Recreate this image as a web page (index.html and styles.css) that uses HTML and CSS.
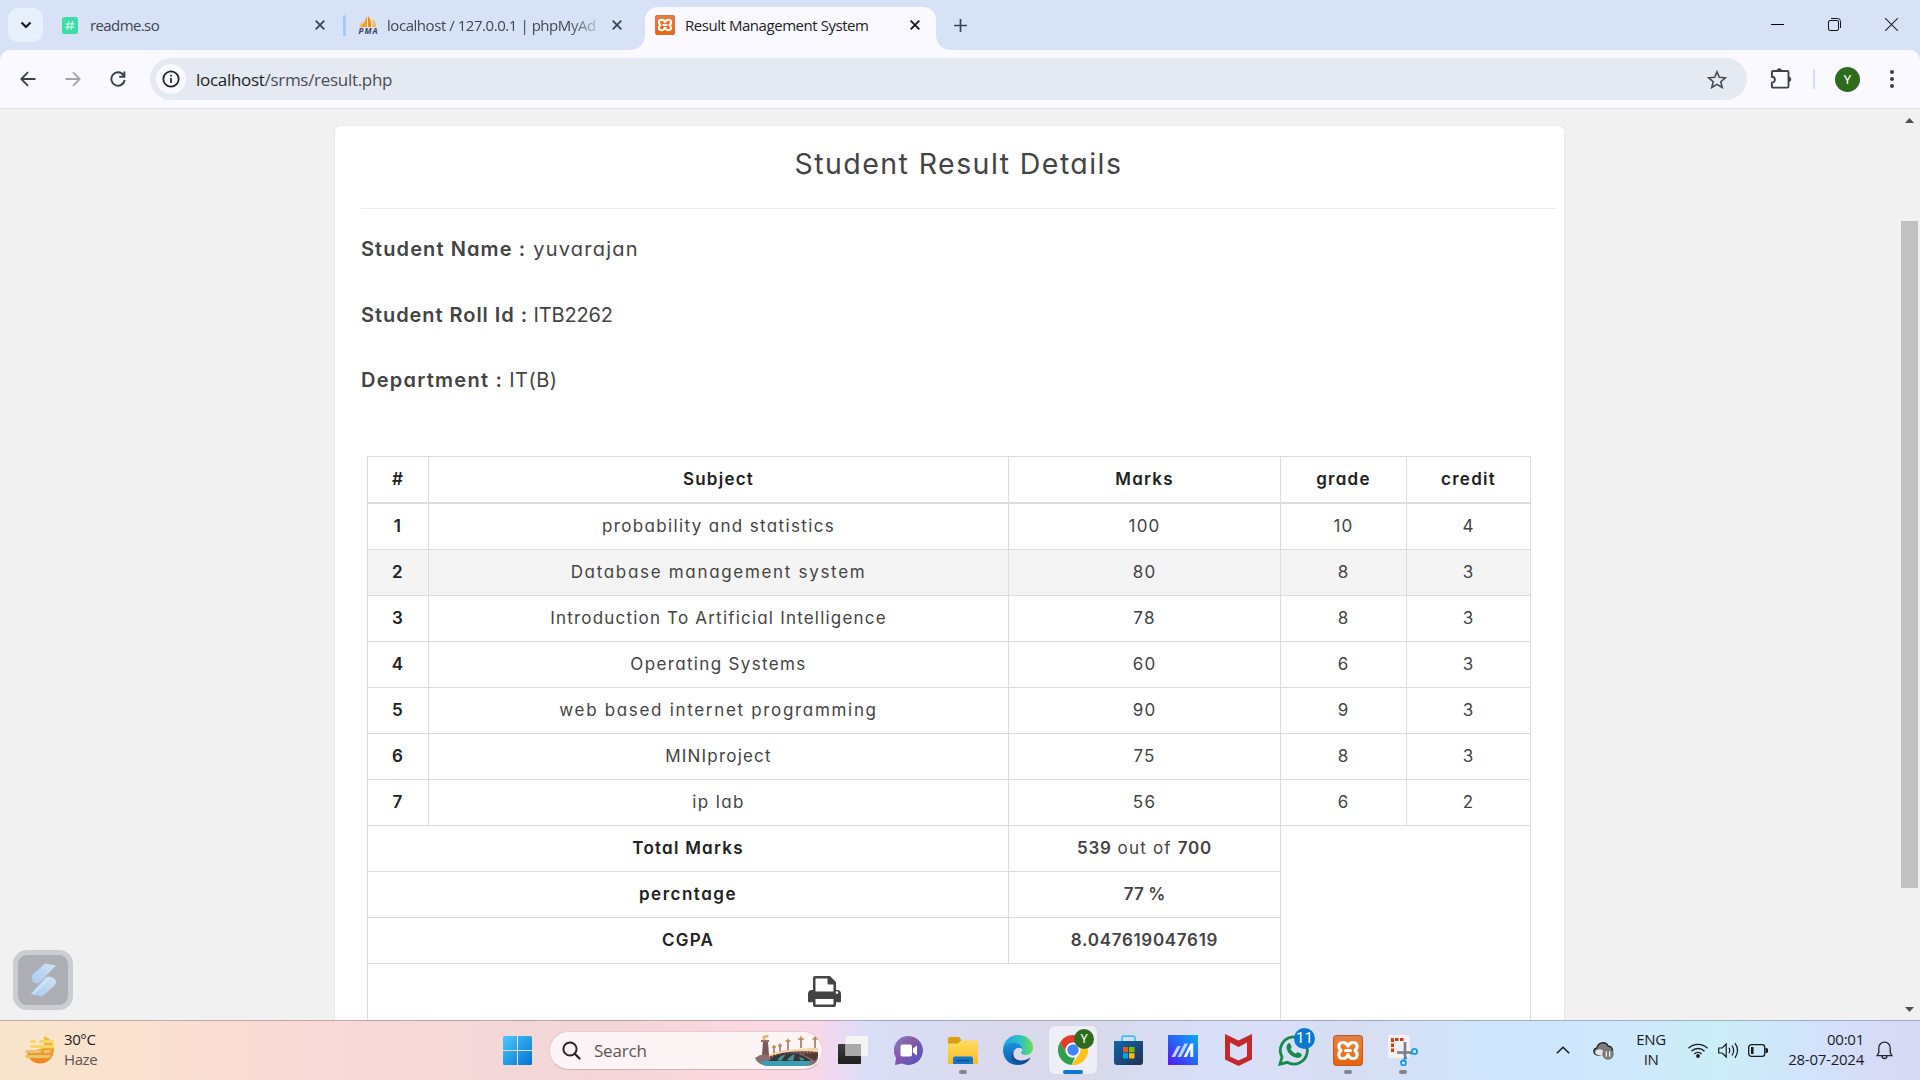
FILE: index.html
```html
<!DOCTYPE html>
<html lang="en">
<head>
<meta charset="utf-8">
<title>Result Management System</title>
<link rel="stylesheet" href="styles.css">
</head>
<body>
<svg class="defs" width="0" height="0">
  <defs>
    <linearGradient id="gWin" x1="0" y1="0" x2="1" y2="1"><stop offset="0" stop-color="#4cc9fb"/><stop offset="1" stop-color="#0072d0"/></linearGradient>
    <linearGradient id="gOrange" x1="0" y1="0" x2="0" y2="1"><stop offset="0" stop-color="#d9814a"/><stop offset=".25" stop-color="#f1782b"/><stop offset="1" stop-color="#e8640e"/></linearGradient>
    <linearGradient id="gChat" x1="0" y1="0" x2="1" y2="1"><stop offset="0" stop-color="#7b83c9"/><stop offset=".4" stop-color="#8a5aa8"/><stop offset="1" stop-color="#4b52c4"/></linearGradient>
    <linearGradient id="gFolder" x1="0" y1="0" x2="0" y2="1"><stop offset="0" stop-color="#ffdb63"/><stop offset="1" stop-color="#fbbd20"/></linearGradient>
    <linearGradient id="gStore" x1="0" y1="0" x2="1" y2="1"><stop offset="0" stop-color="#0b67ad"/><stop offset="1" stop-color="#23304f"/></linearGradient>
    <linearGradient id="gAsus" x1="0" y1="1" x2="1" y2="0"><stop offset="0" stop-color="#5a14f5"/><stop offset=".45" stop-color="#2b5cf8"/><stop offset="1" stop-color="#0aa8ff"/></linearGradient>
    <linearGradient id="gEdge" x1="0" y1="0" x2="1" y2="0"><stop offset="0" stop-color="#1fa3e4"/><stop offset=".6" stop-color="#2fc3c0"/><stop offset="1" stop-color="#6fdc4f"/></linearGradient>
    <linearGradient id="gEdge2" x1="0" y1="0" x2="0" y2="1"><stop offset="0" stop-color="#1b8fdf"/><stop offset="1" stop-color="#0d5ba8"/></linearGradient>
    <linearGradient id="gSun" x1="0" y1="0" x2="0" y2="1"><stop offset="0" stop-color="#f3c33c"/><stop offset="1" stop-color="#f0801f"/></linearGradient>
    <linearGradient id="gBlade" x1="0" y1="1" x2="1" y2="0"><stop offset="0" stop-color="#a9cbf0"/><stop offset="1" stop-color="#cfe2f4"/></linearGradient>
    <linearGradient id="gDark" x1="0" y1="0" x2="0" y2="1"><stop offset="0" stop-color="#3c3c3c"/><stop offset="1" stop-color="#1f1f1f"/></linearGradient>
    <symbol id="xampp" viewBox="0 0 30 32" preserveAspectRatio="none">
      <rect x=".5" y=".5" width="29" height="31" rx="3" fill="url(#gOrange)" stroke="#b9581a"/>
      <path d="M15 11.500C14 8.500 12 7.700 9.800 7.700c-4.300 0-5.300 5-1.800 8.300-3.500 3.300-2.500 8.300 1.800 8.300 2.200 0 4.200-1 5.200-4.300 1 3.300 3 4.300 5.200 4.300 4.300 0 5.300-5 1.800-8.300 3.500-3.300 2.500-8.300-1.800-8.300-2.200 0-4.200.8-5.200 3.800zM12.500 16h5" fill="none" stroke="#fff" stroke-width="3.200" stroke-linejoin="round" stroke-linecap="round"/>
    </symbol>
  </defs>
</svg>
<div class="screen">
  <header class="tabstrip">
    <button class="tab-search"><svg width="12" height="8" viewBox="0 0 12 8"><path d="M1.500 1.500 6 6l4.500-4.500" fill="none" stroke="#17191d" stroke-width="2.200"/></svg></button>
    <div class="tab tab-readme">
      <svg width="16" height="17" viewBox="0 0 16 17"><rect width="16" height="17" rx="2.500" fill="#3ddba5"/><path d="M6.800 4 5.200 13M10.600 4 9 13M3.600 6.800h9M3.200 10.200h9" stroke="#c9fbe7" stroke-width="1.200"/></svg>
      <span class="tab-title">readme.so</span>
      <svg class="x" width="10" height="10" viewBox="0 0 10 10"><path d="m.7.7 8.600 8.600M9.300.7.7 9.300" stroke="#3c4350" stroke-width="1.800"/></svg>
    </div>
    <i class="tab-sep"></i>
    <div class="tab tab-pma">
      <svg width="20" height="20" viewBox="0 0 20 20"><path d="M9 1v11H2.500C5 9 7.500 5 9 1z" fill="#f7a11b"/><path d="M10 1c3 3 3.500 7 3 11h-3z" fill="#f58a0b"/><path d="M14.500 4c2.500 2 3.500 5 3.500 8h-4c.8-3 .8-5 .5-8zM5 5 3 12H1z" fill="#f7b65a"/><text x="10" y="19" text-anchor="middle" class="pma-text" textLength="19">PMA</text></svg>
      <span class="tab-title fade">localhost / 127.0.0.1 | phpMyAd</span>
      <svg class="x" width="10" height="10" viewBox="0 0 10 10"><path d="m.7.7 8.600 8.600M9.300.7.7 9.300" stroke="#3c4350" stroke-width="1.800"/></svg>
    </div>
    <div class="tab tab-active">
      <svg width="20" height="20"><use href="#xampp"/></svg>
      <span class="tab-title">Result Management System</span>
      <svg class="x" width="10" height="10" viewBox="0 0 10 10"><path d="m.7.7 8.600 8.600M9.300.7.7 9.300" stroke="#17191d" stroke-width="1.900"/></svg>
    </div>
    <svg class="plus" width="13" height="13" viewBox="0 0 13 13"><path d="M6.500 0v13M0 6.500h13" stroke="#3c4350" stroke-width="1.700"/></svg>
    <div class="win-controls">
      <svg width="13" height="13" viewBox="0 0 13 13"><path d="M0 6.500h13" stroke="#000"/></svg>
      <svg width="13" height="13" viewBox="0 0 13 13"><rect x=".5" y="2.500" width="10" height="10" rx="1.500" fill="none" stroke="#111"/><path d="M3 .5h6.500a3 3 0 0 1 3 3V10" fill="none" stroke="#111"/></svg>
      <svg width="13" height="13" viewBox="0 0 13 13"><path d="m0 0 13 13M13 0 0 13" stroke="#222" stroke-width="1.100"/></svg>
    </div>
  </header>
  <div class="toolbar-back">
  <nav class="toolbar">
    <svg class="nav" width="16" height="16" viewBox="0 0 16 16"><path d="M15.500 8H1.500M8 1.200 1.300 8 8 14.800" fill="none" stroke="#3a414e" stroke-width="1.800"/></svg>
    <svg class="nav" width="16" height="16" viewBox="0 0 16 16"><path d="M.5 8h14M8 1.200 14.700 8 8 14.800" fill="none" stroke="#a3a5ab" stroke-width="1.800"/></svg>
    <svg class="nav" width="16" height="16" viewBox="0 0 16 16"><path d="M13.600 4.200A6.700 6.700 0 1 0 14.700 9M14.400.5v5.200H9.200" fill="none" stroke="#3a414e" stroke-width="1.900"/></svg>
    <div class="omnibox">
      <span class="info"><svg width="18" height="18" viewBox="0 0 18 18"><circle cx="9" cy="9" r="7.700" fill="none" stroke="#22252b" stroke-width="1.800"/><path d="M9 8v5M9 4.800v1.700" stroke="#22252b" stroke-width="1.700"/></svg></span>
      <span class="url"><b>localhost</b>/srms/result.php</span>
      <svg class="star" width="20" height="19" viewBox="0 0 20 19"><path d="m10 1.800 2.300 5.500 6 .5-4.500 3.900 1.400 5.800L10 14.400l-5.200 3.100 1.400-5.800-4.500-3.900 6-.5z" fill="none" stroke="#474a50" stroke-width="1.600"/></svg>
    </div>
    <svg class="puzzle" width="22" height="22" viewBox="0 0 22 22"><path d="M1.900 4.200q0-1.200 1.200-1.200h14.200q1.200 0 1.200 1.200v14.200q0 1.200-1.200 1.200H3.100q-1.200 0-1.200-1.200v-3.600a3 3 0 0 0 0-6z" fill="none" stroke="#3a414e" stroke-width="1.900"/><path d="M7 3a2.300 2.300 0 0 1 4.600 0zM18.500 9a2.300 2.300 0 0 1 0 4.600z" fill="#3a414e" stroke="#3a414e"/></svg>
    <i class="tool-sep"></i>
    <span class="avatar">Y</span>
    <svg class="dots" width="4" height="18" viewBox="0 0 4 18"><g fill="#3a414e"><circle cx="2" cy="2" r="2"/><circle cx="2" cy="9" r="2"/><circle cx="2" cy="16" r="2"/></g></svg>
  </nav>
  </div>
  <div class="viewport">
    <main class="page">
      <section class="card">
        <h2>Student Result Details</h2>
        <hr>
        <p class="name"><b>Student Name :</b> yuvarajan</p>
        <p class="roll"><b>Student Roll Id :</b> ITB2262</p>
        <p class="dept"><b>Department :</b> IT(B)</p>
        <table>
          <colgroup><col class="c1"><col class="c2"><col class="c3"><col class="c4"><col class="c5"></colgroup>
          <thead><tr><th>#</th><th>Subject</th><th>Marks</th><th>grade</th><th>credit</th></tr></thead>
          <tbody>
            <tr class="first"><th>1</th><td class="mid">probability and statistics</td><td>100</td><td>10</td><td>4</td></tr>
            <tr class="hover"><th>2</th><td class="wide">Database management system</td><td>80</td><td>8</td><td>3</td></tr>
            <tr><th>3</th><td>Introduction To Artificial Intelligence</td><td>78</td><td>8</td><td>3</td></tr>
            <tr><th>4</th><td class="mid">Operating Systems</td><td>60</td><td>6</td><td>3</td></tr>
            <tr><th>5</th><td class="wide">web based internet programming</td><td>90</td><td>9</td><td>3</td></tr>
            <tr><th>6</th><td>MINIproject</td><td>75</td><td>8</td><td>3</td></tr>
            <tr><th>7</th><td class="mid">ip lab</td><td>56</td><td>6</td><td>2</td></tr>
            <tr><th colspan="2">Total Marks</th><td><b>539</b> out of <b>700</b></td><td colspan="2" rowspan="4"></td></tr>
            <tr><th colspan="2" class="wide">percntage</th><td class="percent"><b>77 %</b></td></tr>
            <tr><th colspan="2">CGPA</th><td><b>8.047619047619</b></td></tr>
            <tr class="print"><td colspan="3"><svg width="33" height="31" viewBox="0 0 33 31"><path fill-rule="evenodd" d="M5 14V2q0-2 2-2h15l6 6v8h1q4 0 4 4v7.500q0 .8-.8.8H28V29q0 2-2 2H7q-2 0-2-2v-2.700H.8q-.8 0-.8-.8V18q0-4 4-4zM7.500 2.500v13h18v-7H21q-1.500 0-1.500-1.500V2.500zM7.500 23v5.500h18V23zM29 15.300a1.300 1.300 0 1 0 .01 2.600 1.300 1.300 0 0 0-.01-2.600z" fill="#444"/></svg></td></tr>
          </tbody>
        </table>
      </section>
    </main>
    <aside class="scrollbar">
      <svg width="9" height="5" viewBox="0 0 9 5"><path d="M0 5 4.500 0 9 5z" fill="#505050"/></svg>
      <i class="thumb"></i>
      <svg width="9" height="5" viewBox="0 0 9 5"><path d="m0 0 4.500 5L9 0z" fill="#505050"/></svg>
    </aside>
    <div class="widget"><svg width="27" height="34" viewBox="0 0 27 34"><path d="M15 .5 26 2.500 9.500 19.500Q6.500 21.500 3.500 19 0 15 3 11z" fill="url(#gBlade)"/><path d="M12 33.500.5 31 15.500 14.500Q19 12 24 15.500 28 18.500 24.500 22.500z" fill="url(#gBlade)"/><path d="M3 31 19 15" stroke="#d9e8f6" stroke-width="1.500"/></svg></div>
  </div>
  <footer class="taskbar">
    <div class="weather">
      <svg width="30" height="28" viewBox="0 0 30 28"><path d="M19 0c6 2 10 7 10 13.500A14 14 0 0 1 15 27.500C8 27.500 2 22 2 16l17-4z" fill="url(#gSun)"/><g stroke-linecap="round" stroke-width="2.800"><path d="M6.500 5.500h3M15.500 5.500H28M6.500 10.500H28" stroke="#f9d566"/><path d="M1.500 15.500H15M20 15.500h4M1.500 20.500H24" stroke="#e6c56e"/></g></svg>
      <div class="weather-text"><span>30°C</span><span class="dim">Haze</span></div>
    </div>
    <svg class="start" width="29" height="29" viewBox="0 0 29 29"><path d="M1.500 0H14v14H0V1.500Q0 0 1.500 0zM15 0h12.500Q29 0 29 1.500V14H15zM0 15h14v14H1.500Q0 29 0 27.500zM15 15h14v12.500q0 1.500-1.500 1.500H15z" fill="url(#gWin)"/></svg>
    <div class="search">
      <svg width="19" height="19" viewBox="0 0 19 19"><circle cx="8" cy="8" r="6.600" fill="none" stroke="#2b2525" stroke-width="2"/><path d="m12.800 12.800 4.700 4.700" stroke="#2b2525" stroke-width="2.300" stroke-linecap="round"/></svg>
      <span>Search</span>
      <svg class="bridge" width="64" height="31" viewBox="0 0 64 31"><path d="M0 23l5-3h9l12-4 37-3v11q-3 7-11 7H12Q3 30 0 23z" fill="#8c6d70"/><path d="M5 26h52q-3 5-9 5H12q-5-1.500-7-5z" fill="#3a9fb5"/><path d="M14 26c6-9 24-12 38-3l4 3z" fill="#37343b"/><path d="M22 25q4-5 9-6l-5 7zM32 25q4-5 8-6l-2 7zM44 22l6 2-4 2z" fill="#3f9691"/><path d="M14 19q20-6 49-6v4q-8-1-18-1-16 0-31 6z" fill="#f6d6a2"/><path d="M15 22q15-5 48-4" fill="none" stroke="#5c3f42" stroke-width="2" stroke-dasharray="2 1.500"/><path d="m47 19 13 7 3-5v-3z" fill="#5c3833"/><path d="M8 7h5l1 13H7z" fill="#77595e"/><path d="M6 6h8" stroke="#8e6b68" stroke-width="2"/><path d="M10 5q-3-3 0-4 2 2 3-1" stroke="#eba14f" stroke-width="1.800" fill="none"/><g stroke="#765044" stroke-width="1.200"><path d="M19 12v6M25 11v5M33 6v9M46 3v10M60 2v11"/></g><g fill="none" stroke="#b98850" stroke-width="1.300"><path d="M17 12h4M19 10v3M23 10.500h4M25 8.500v4M30.500 6h5M33 3.500v5M43 4h6M46 1v6M57.500 4h5M60 1.500v5"/></g></svg>
    </div>
    <div class="apps">
      <span class="app"><svg width="30" height="28" viewBox="0 0 30 28"><rect y="8" width="23" height="20" rx="1" fill="url(#gDark)"/><rect x="7.500" width="22.500" height="20" rx="1" fill="#f4f4f4"/><path d="M7.500 8H23v12H8.500q-1 0-1-1z" fill="#a9a9a9"/></svg></span>
      <span class="app"><svg width="29" height="29" viewBox="0 0 29 29"><path d="M14.500 0a14.500 14.500 0 1 1-6.500 27.500L1 29l1-7A14.500 14.500 0 0 1 14.500 0z" fill="url(#gChat)"/><rect x="6.500" y="8.500" width="11.500" height="12" rx="1.800" fill="#fff"/><path d="m19 12.500 4-3v10l-4-3z" fill="#fff"/></svg></span>
      <span class="app run"><svg width="30" height="27" viewBox="0 0 30 27"><path d="M0 2Q0 0 2 0h9l3 4v8H0z" fill="#dd9f10"/><path d="M0 6.500h10L13 3.500h15.500q1.500 0 1.500 1.500V27H0z" fill="url(#gFolder)"/><path d="M5 27v-5.500q0-2 2-2h16q2 0 2 2V27z" fill="#1378c9"/><path d="M9 23.500h12" stroke="#0c4c8c" stroke-width="1.500" stroke-linecap="round"/></svg></span>
      <span class="app"><svg width="30" height="30" viewBox="0 0 30 30"><path d="M15 0c9 0 15 6 15 12.500 0 5-3.500 7.500-7 7.500s-5-1.300-5-2c0-.8 1.200-1.500 1.200-4 0-3-3.500-6-8-6C5 8 1 12 0 15 0 6 7 0 15 0z" fill="url(#gEdge)"/><path d="M0 15c1-5 6-7.500 11-7.200 5 .2 8.200 3 8.200 6.200-4-3-9 0-9 5 0 7 9 9 17.300 3.500C25 27 20.500 30 15 30 6.500 30 0 24 0 15z" fill="url(#gEdge2)"/><path d="M10.200 19c0 7 9 9 17.300 3.500-3 5.500-7 7-11 6.800C9 28 5 20 13.500 13c-2 1.200-3.300 3.500-3.300 6z" fill="#124e93"/></svg></span>
      <span class="app chrome"><svg width="30" height="30" viewBox="0 0 30 30"><path d="M15 0a15 15 0 0 1 13 7.500H15A7.500 7.500 0 0 0 8.500 18.800L2 7.500A15 15 0 0 1 15 0z" fill="#e33b2e"/><path d="M2 7.500l6.500 11.200A7.500 7.500 0 0 0 17 22.300L13.500 30A15 15 0 0 1 2 7.500z" fill="#2ba24c"/><path d="M28 7.500A15 15 0 0 1 13.500 30l8-11.300A7.500 7.500 0 0 0 19 8.500l-1-1z" fill="#fcc31e"/><circle cx="15" cy="15" r="7.200" fill="#fff"/><circle cx="15" cy="15" r="5.700" fill="#4286f5"/></svg><em class="badge green">Y</em></span>
      <span class="app"><svg width="29" height="30" viewBox="0 0 29 30"><path d="M8 7V3q0-1.800 1.800-1.800h9.400Q21 1.200 21 3v4" fill="none" stroke="#39c3f3" stroke-width="1.700"/><path d="M0 6h29v21q0 3-3 3H3q-3 0-3-3z" fill="url(#gStore)"/><path d="M9 12h5v5.300H9z" fill="#f25022"/><path d="M15 12h5.500v5.300H15z" fill="#7fba00"/><path d="M9 18.200h5v5.300H9z" fill="#00a4ef"/><path d="M15 18.200h5.500v5.300H15z" fill="#ffb900"/></svg></span>
      <span class="app"><svg width="30" height="30" viewBox="0 0 30 30"><path d="M0 0h30v30H0z" fill="url(#gAsus)"/><path d="M3.500 22 9.500 11h3.300L7 22zM9.500 22 16.500 8.500H20L13 22z" fill="#c3d6ff"/><path d="M15.500 22 22.500 8.500h2.800V22h-3v-7.500L18.700 22z" fill="#f2f6ff"/></svg></span>
      <span class="app"><svg width="27" height="32" viewBox="0 0 27 32"><path d="m0 0 13.500 6.500L27 0v25.500L13.500 32 0 25.500zm5 8.500v14l8.500 4 8.500-4v-14l-8.500 4.500z" fill="#c3282d" fill-rule="evenodd"/></svg></span>
      <span class="app whats"><svg width="31" height="31" viewBox="0 0 31 31"><path d="M2 29.200 4 22A13.500 13.500 0 1 1 9.300 27.300z" fill="none" stroke="#16894b" stroke-width="2.800"/><path d="M10 8.500q1-1.200 2 0l1.700 3.200q0 1-1.200 2.300 2 3.500 5.300 4.700l1.800-1.600 4 2q.8 3.500-3.800 4Q11 22 8.500 13.500q-.2-3.200 1.500-5z" fill="#16894b"/></svg><em class="badge blue">11</em></span>
      <span class="app run"><svg width="30" height="31"><use href="#xampp"/></svg></span>
      <span class="app run snip"><svg width="30" height="31" viewBox="0 0 30 31"><rect width="22" height="23" rx="2" fill="#f1f0f2"/><path d="M4.500 17V4.500H16" fill="none" stroke="#d03a14" stroke-width="3" stroke-dasharray="3.500 1.500"/><path d="M17 7v14M9 17.500h14M16 17l2 7" stroke="#7b7d84" stroke-width="2.600"/><circle cx="26.500" cy="16.500" r="2.600" fill="none" stroke="#2196e8" stroke-width="1.800"/><circle cx="15.500" cy="28" r="2.500" fill="none" stroke="#2196e8" stroke-width="1.800"/><path d="m22 19 2.500-1.500M16.500 22v3" stroke="#2196e8" stroke-width="1.800"/></svg></span>
    </div>
    <div class="tray">
      <svg class="chev" width="14" height="8" viewBox="0 0 14 8"><path d="m.8 7.200 6.200-6 6.200 6" fill="none" stroke="#17191d" stroke-width="1.500"/></svg>
      <svg class="cloud" width="21" height="19" viewBox="0 0 21 19"><path d="M4.500 14.200C-.5 13 0 7.500 4 6.800 5 1 13 0 15 5c4 0 5.500 4 4 7z" fill="#7d7d7d" stroke="#222" stroke-width="1.300"/><path d="M2.500 13q-1-4 3-4.500 3-1 5 2l2 3.500H5z" fill="#e4e4e4"/><circle cx="15" cy="13" r="5.700" fill="#777"/><path d="M13.300 10.300v5.400M16.700 10.300v5.400" stroke="#fff" stroke-width="1.200"/></svg>
      <div class="lang"><span>ENG</span><span>IN</span></div>
      <svg class="wifi" width="20" height="15" viewBox="0 0 20 15"><g fill="none" stroke="#17191d" stroke-width="1.300"><path d="M.5 5.200a13.500 13.500 0 0 1 19 0M3.500 8.200a9.200 9.200 0 0 1 13 0M6.300 11a5.200 5.200 0 0 1 7.400 0"/></g><circle cx="10" cy="13" r="1.900" fill="#17191d"/></svg>
      <svg class="vol" width="21" height="17" viewBox="0 0 21 17"><g fill="none" stroke="#17191d" stroke-width="1.200"><path d="M.7 6h3.500l4-4v13l-4-4H.7z"/><path d="M11 5.800q1.500 2.700 0 5.400M14 3.500q3.300 5 0 10M17 1.200q5 7.300 0 14.600"/></g></svg>
      <svg class="batt" width="20" height="13" viewBox="0 0 20 13"><rect x=".7" y=".7" width="16" height="11.600" rx="2.600" fill="none" stroke="#17191d" stroke-width="1.300"/><path d="M3 3h2.500v7H3zM17.500 4h1q1.500 0 1.500 1.500v2Q20 9 18.500 9h-1z" fill="#17191d"/></svg>
      <div class="clock"><span>00:01</span><span>28-07-2024</span></div>
      <svg class="bell" width="17" height="19" viewBox="0 0 17 19"><path d="M2.800 11.500V6.800a5.700 5.700 0 0 1 11.400 0v4.700l1.800 3.200H1zM6 15a2.500 2.500 0 0 0 5 0" fill="none" stroke="#22242a" stroke-width="1.300"/></svg>
    </div>
  </footer>
</div>
</body>
</html>
```
FILE: styles.css
```css
* { box-sizing: border-box; }
body { margin: 0; font-family: "Open Sans", "Noto Sans", sans-serif; }
svg { display: block; flex: none; }
.defs { position: absolute; }
.screen { width: 1920px; height: 1080px; overflow: hidden; display: flex; flex-direction: column; }

.tabstrip { height: 50px; flex: none; background: #d8e2f7; display: flex; align-items: center; }
.tab-search { margin: 0 0 0 8px; padding: 0; width: 35px; height: 34px; border: 0; border-radius: 11px; background: #e9f0fd; display: flex; align-items: center; justify-content: center; }
.tab { display: flex; align-items: center; color: #41454d; font-size: 15px; white-space: nowrap; }
.tab .x { margin-left: auto; }
.tab-readme { width: 263px; margin-left: 19px; gap: 12px; }
.tab-readme .tab-title { letter-spacing: -.6px; }
.tab-sep { width: 3px; height: 21px; margin-left: 18px; border-radius: 2px; background: #a8c7fa; }
.tab-pma { width: 264px; margin-left: 12px; gap: 9px; }
.tab-title { letter-spacing: -.45px; }
.fade { -webkit-mask-image: linear-gradient(90deg, #000 87%, rgba(0,0,0,.25)); mask-image: linear-gradient(90deg, #000 87%, rgba(0,0,0,.25)); }
.pma-text { font: italic bold 8px "Open Sans", sans-serif; fill: #3b3d6e; }
.tab-active { align-self: flex-end; width: 291px; height: 43px; margin-left: 23px; padding: 0 16px 7px 10px; gap: 10px; background: #faf9ff; border-radius: 13px 13px 0 0; color: #1c1e22; position: relative; }
.tab-active::before, .tab-active::after { content: ""; position: absolute; bottom: 0; width: 14px; height: 14px; }
.tab-active::before { left: -14px; background: radial-gradient(circle at 0 0, transparent 13.500px, #faf9ff 14px); }
.tab-active::after { right: -14px; background: radial-gradient(circle at 100% 0, transparent 13.500px, #faf9ff 14px); }
.plus { margin-left: 18px; }
.win-controls { margin-left: auto; margin-right: 22px; padding-bottom: 1px; display: flex; gap: 44px; }

.toolbar-back { flex: none; background: #d8e2f7; }
.toolbar { height: 59px; background: #faf9ff; border-bottom: 1px solid #dedfe8; border-radius: 10px 10px 0 0; display: flex; align-items: center; padding-left: 20px; }
.nav { margin-right: 29px; }
.omnibox { width: 1597px; height: 42px; margin-left: -5px; padding: 0 20px 0 6px; border-radius: 21px; background: #e5e9f2; display: flex; align-items: center; }
.info { width: 30px; height: 30px; border-radius: 50%; background: #faf9ff; display: flex; align-items: center; justify-content: center; }
.url { margin-left: 10px; font-size: 17px; letter-spacing: -.3px; color: #4a4d53; }
.url b { font-weight: 400; color: #1c1e22; }
.star { margin-left: auto; }
.puzzle { margin-left: 23px; }
.tool-sep { width: 2px; height: 20px; margin-left: 21px; background: #cfe0fc; }
.avatar { width: 25px; height: 25px; margin-left: 20px; border-radius: 50%; background: #2f6b1c; color: #fff; font: 13px/25px Roboto, sans-serif; text-align: center; }
.dots { margin-left: 30px; }

.viewport { flex: none; height: 911px; background: #f1f1f1; position: relative; display: flex; overflow: hidden; font-family: Inter, sans-serif; font-feature-settings: "cv11"; }
.page { flex: 1; padding: 17px 0 0 335px; }
.card { width: 1229px; height: 1000px; padding: 0 8px 0 26px; background: #fff; border-radius: 5px; box-shadow: 0 0 2px rgba(0,0,0,.12); color: #444; }
.card h2 { margin: 0; padding-top: 17px; height: 82px; font-size: 28.500px; line-height: 42px; font-weight: 400; letter-spacing: 1.430px; text-align: center; }
.card hr { margin: 0; border: 0; height: 1px; background: #ececec; }
.card p { margin: 0; padding-top: 25px; height: 65px; font-size: 20px; line-height: 32px; letter-spacing: -.15px; }
.card p b { font-weight: 600; letter-spacing: 1.100px; }
.card p.name { padding-top: 24px; letter-spacing: 1.250px; }
.card p.roll b { letter-spacing: .95px; }
.card p.dept { height: 117px; letter-spacing: .45px; }
.card p.dept b { letter-spacing: 1.250px; }

table { width: 1164px; margin-left: 6px; table-layout: fixed; border-collapse: collapse; border: 1px solid #ddd; font-size: 17px; letter-spacing: 1.200px; text-align: center; }
.c1 { width: 61px; } .c2 { width: 580px; } .c3 { width: 272px; } .c4 { width: 126px; } .c5 { width: 124px; }
th, td { height: 46px; padding: 0 0 1px; border: 1px solid #ddd; line-height: 24px; vertical-align: middle; }
thead th { border-bottom-width: 2px; padding-bottom: 0; }
.first th, .first td { height: 47px; }
th { color: #222; font-weight: 600; letter-spacing: 1.250px; }
td.mid { letter-spacing: 1.350px; }
td.wide { letter-spacing: 1.680px; }
th.wide { letter-spacing: 1.500px; }
td b { font-weight: 600; letter-spacing: .7px; }
td.percent b { letter-spacing: .1px; }
.hover { background: #f4f4f4; }
.print td { height: 80px; vertical-align: top; padding-top: 12px; }
.print svg { margin: 0 auto; }

.scrollbar { width: 19px; padding: 9px 2px 8px 0; display: flex; flex-direction: column; align-items: center; }
.thumb { width: 17px; height: 667px; margin-top: 98px; margin-bottom: auto; background: #c1c1c1; }
.widget { position: absolute; left: 13px; top: 841px; width: 60px; height: 60px; border: 5px solid #cccdd1; border-radius: 14px; background: #adaeb4; display: flex; align-items: center; justify-content: center; }

.taskbar { height: 60px; flex: none; border-top: 1px solid rgba(60,60,80,.33); padding-bottom: 1px; display: flex; align-items: center; color: #1b1b1f;
  background-image: linear-gradient(90deg, #f8e5cb 0, #fae1d0 140px, #fadad8 300px, #f3d7d8 520px, #f4d5d8 620px, #fbd8e0 740px, #f8d8e6 815px, #eed9f2 835px, #d9def6 870px, #dad9ec 1000px, #d8d9ea 1080px, #d8dff8 1220px, #d7def3 1360px, #cfe6fc 1490px, #cfe8fc 1620px, #cbeef7 1720px, #d1e4fb 1800px, #d8d9f5 1900px); }
.weather { width: 478px; padding-left: 25px; display: flex; gap: 9px; align-items: center; }
.weather svg { margin-top: -1px; }
.weather-text { display: flex; flex-direction: column; font-size: 15px; line-height: 20px; letter-spacing: -.4px; margin-top: -3px; }
.dim { color: #5f5650; }
.start { margin-left: 25px; }
.search { width: 274px; height: 39px; margin-left: 17px; padding: 0 3px 0 12px; border-radius: 20px; background: #fcf4f5; border: 1px solid #e5cdd0; border-bottom-color: #cdb5b9; display: flex; align-items: center; color: #5c5556; font-size: 17px; letter-spacing: -.2px; }
.search span { margin-left: 13px; }
.bridge { margin-left: auto; }
.apps { display: flex; gap: 7px; margin-left: 6px; }
.app { width: 48px; height: 48px; display: flex; align-items: center; justify-content: center; position: relative; }
.app.run::after, .app.chrome::after { content: ""; position: absolute; left: 20px; bottom: 0; width: 8px; height: 4px; border-radius: 2px; background: #84858e; }
.app.chrome { background: #eeeef7; border-radius: 5px; box-shadow: 0 0 1px rgba(0,0,0,.15); }
.app.chrome::after { left: 14px; width: 20px; background: #0e78d0; }
.badge { position: absolute; right: 3px; top: 3px; width: 20px; height: 20px; border-radius: 50%; color: #fff; font: 12px/20px Roboto, sans-serif; text-align: center; }
.green { background: #2f6b1c; }
.blue { background: #0a78d0; top: 2px; right: 2px; width: 21px; height: 21px; font-size: 15px; line-height: 21px; }
.tray { display: flex; align-items: center; margin-left: auto; font-size: 15px; line-height: 20px; }
.cloud { margin-left: 23px; }
.lang { width: 30px; margin: -2px 0 0 22px; display: flex; flex-direction: column; align-items: center; letter-spacing: -.4px; }
.wifi { margin-left: 22px; }
.vol { margin-left: 10px; }
.batt { margin-left: 9px; }
.clock { width: 80px; margin: -2px 0 0 16px; display: flex; flex-direction: column; align-items: flex-end; letter-spacing: -.25px; }
.bell { margin: 0 27px 0 12px; }
```
